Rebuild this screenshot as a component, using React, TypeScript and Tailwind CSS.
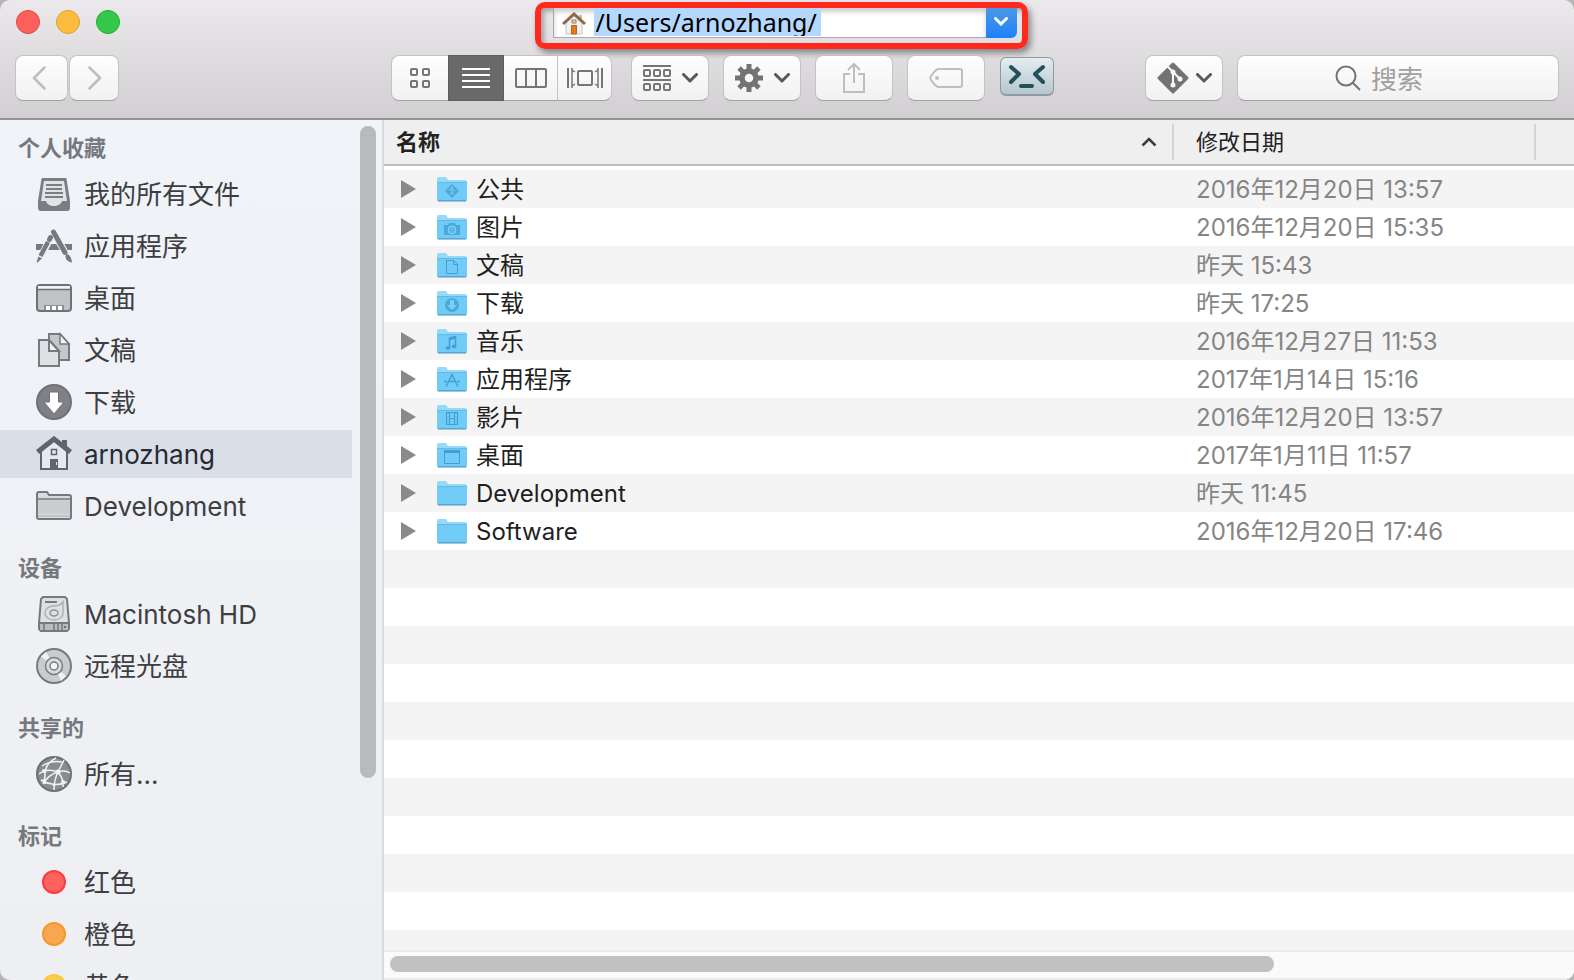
import React from "react";
import clsx from "clsx";

type SidebarItem = { label: string; icon: React.ReactNode; active?: boolean };

type SidebarSection = { title: string; items: SidebarItem[] };

type FileRow = { name: string; date: string; glyph?: React.ReactNode };

/* ---------- sidebar icons, 36x36 ---------- */

function Icon36({ children }: { children: React.ReactNode }) {
  return (
    <svg viewBox="0 0 36 36" className="size-9 shrink-0" fill="none" aria-hidden="true">
      {children}
    </svg>
  );
}

const AllFilesIcon = (
  <Icon36>
    <path d="M6.5 3h23L33 25v8.500H3V25z" fill="#7b7d82" />
    <path d="M8 5h20l3 20h-5c-1 3.500-4 5-8 5s-7-1.500-8-5H5z" fill="#e2e3e7" />
    <path d="M6.500 3h23L33 25v7a2 2 0 0 1-2 2H5a2 2 0 0 1-2-2v-7z" stroke="#7b7d82" strokeWidth="2" strokeLinejoin="round" />
    <path d="M10 9h16M10 13h16M9 17h18M9 21h18" stroke="#7b7d82" strokeWidth="2" />
  </Icon36>
);

const AppsIcon = (
  <Icon36>
    <path d="M0 16h36v6H0z" fill="#77797e" />
    <path d="M17.500 4 34 33" stroke="#f0f2f6" strokeWidth="7" />
    <path d="M15 9 2 34" stroke="#f0f2f6" strokeWidth="7" />
    <path d="M17.500 4 29 24.500" stroke="#77797e" strokeWidth="5" strokeLinecap="round" />
    <path d="M30 26.500c3-1 5 2 6 8-5-1-7.500-4-6-8z" fill="#77797e" />
    <path d="m14.500 9.500-1 2" stroke="#77797e" strokeWidth="5" strokeLinecap="round" />
    <path d="m12 14-7.500 14" stroke="#77797e" strokeWidth="4.500" />
    <path d="M2.500 28.500 6 30.500l-4.500 4-1-.5z" fill="#77797e" />
    <path d="M15.500 22h4l-3-5.500z" fill="#77797e" />
  </Icon36>
);

const DesktopIcon = (
  <Icon36>
    <rect x="1" y="5" width="34" height="26" rx="3" fill="#c0c2c6" stroke="#6f7175" strokeWidth="2" />
    <path d="M2 6h32v3H2z" fill="#f2f3f6" />
    <path d="M1 9.500h34" stroke="#6f7175" strokeWidth="1.500" />
    <path d="M8 25h20v5H8z" fill="#8e9094" />
    <path d="M10 26h4v4h-4zM16 26h4v4h-4zM22 26h4v4h-4z" fill="#fff" />
  </Icon36>
);

const DocumentsIcon = (
  <Icon36>
    <path d="M13 2h11l9 10v16H13z" fill="#c5c7cb" stroke="#77797e" strokeWidth="2" />
    <path d="M24 2v10h9z" fill="#f0f2f6" stroke="#77797e" strokeWidth="1.500" />
    <path d="M3 8h10l10 11v15H3z" fill="#dfe0e4" stroke="#77797e" strokeWidth="2" />
    <path d="M13 8v11h10z" fill="#f0f2f6" stroke="#77797e" strokeWidth="2" />
  </Icon36>
);

const DownloadsIcon = (
  <Icon36>
    <circle cx="18" cy="18" r="17" fill="#7f8186" stroke="#6f7175" strokeWidth="2" />
    <path d="M13.500 8h9v10H28L18 30 8 18h5.500z" fill="#fff" stroke="#6f7175" />
  </Icon36>
);

const HomeIcon = (
  <Icon36>
    <path d="M26 4h5v10h-5z" fill="#5f6470" />
    <path d="M5 15 18 4l13 11v18H5z" fill="#e6e9f0" stroke="#5f6470" strokeWidth="2" />
    <path d="M1.500 16 18 3l16.500 13" stroke="#5f6470" strokeWidth="5" />
    <path d="M15.500 13.500h5v5h-5z" fill="#e6e9f0" stroke="#5f6470" strokeWidth="1.500" />
    <path d="M14 23h8v10h-8z" fill="#5f6470" />
    <path d="M20 26h1v3h-1z" fill="#e6e9f0" />
  </Icon36>
);

const FolderIcon = (
  <Icon36>
    <path d="M1 6c0-2 1-2 2-2h8l2 3h20c1 0 2 .5 2 2v20c0 1-1 2-2 2H3c-1 0-2-1-2-2z" fill="#d9dbde" stroke="#77797e" strokeWidth="2" />
    <path d="M2 12h32v14H2z" fill="#cbcdd0" />
    <path d="M1 11h34" stroke="#77797e" strokeWidth="1.500" />
    <path d="M2 28h32" stroke="#a5a7aa" />
  </Icon36>
);

const HardDiskIcon = (
  <Icon36>
    <path d="M7 1h22l2 2 2 24v6l-2 2H5l-2-2v-6L5 3z" fill="#dfe0e4" stroke="#77797e" strokeWidth="2" strokeLinejoin="round" />
    <path d="M4 28h28v6H4z" fill="#b9bbbf" />
    <path d="M3 27h30" stroke="#77797e" strokeWidth="2" />
    <path d="M8 28v6M18 28v6M22 28v6M26 28v6" stroke="#85878b" strokeWidth="2" />
    <path d="M9 6h12" stroke="#77797e" strokeWidth="2" />
    <path d="M27 6v11c0 4-4 7-9 7s-9-3-9-7 4-7 8-7c5 0 8-1 10-4z" stroke="#aeb0b5" strokeWidth="1.500" />
    <ellipse cx="18" cy="17" rx="4" ry="3" stroke="#8e9095" strokeWidth="1.500" />
    <circle cx="29" cy="31" r="1" fill="#55575b" />
  </Icon36>
);

const DiscIcon = (
  <Icon36>
    <circle cx="18" cy="18" r="17" fill="#cacbcf" stroke="#77797e" strokeWidth="2" />
    <path d="M18 18 5 8.500 10 4zM18 18l12 10-5 5z" fill="#f0f1f3" />
    <circle cx="18" cy="18" r="8.500" fill="#d9dadd" stroke="#77797e" strokeWidth="1.500" />
    <circle cx="18" cy="18" r="4" fill="#f4f5f7" stroke="#77797e" strokeWidth="1.500" />
  </Icon36>
);

const NetworkIcon = (
  <Icon36>
    <circle cx="18" cy="18" r="17" fill="#898b8f" stroke="#6f7175" strokeWidth="2" />
    <path
      d="M20 2C10 7 8 14 9 28M6 10c6-4 14-5 20-4M22 16 28 4M22 16C14 13 8 14 3 18M22 16c6-2 9-1 12 1M22 16C14 18 10 23 7 28M22 16c4 5 6 9 5 15M22 16c-3 6-4 12-4 18M5 24c8 5 18 6 26 2"
      stroke="#f0f2f4"
      strokeWidth="1.500"
    />
    <circle cx="22" cy="16" r="2.500" fill="#f0f2f4" />
    <circle cx="8" cy="15" r="2" fill="#f0f2f4" />
    <circle cx="27" cy="26" r="2" fill="#f0f2f4" />
    <circle cx="8" cy="25" r="2" fill="#f0f2f4" />
    <circle cx="18" cy="29" r="1.500" fill="#f0f2f4" />
  </Icon36>
);

function TagDot({ className }: { className: string }) {
  return (
    <span className="flex w-9 shrink-0 justify-center">
      <span className={clsx("size-6 rounded-full border-2", className)} />
    </span>
  );
}

const sections: SidebarSection[] = [
  {
    title: "个人收藏",
    items: [
      { label: "我的所有文件", icon: AllFilesIcon },
      { label: "应用程序", icon: AppsIcon },
      { label: "桌面", icon: DesktopIcon },
      { label: "文稿", icon: DocumentsIcon },
      { label: "下载", icon: DownloadsIcon },
      { label: "arnozhang", icon: HomeIcon, active: true },
      { label: "Development", icon: FolderIcon },
    ],
  },
  {
    title: "设备",
    items: [
      { label: "Macintosh HD", icon: HardDiskIcon },
      { label: "远程光盘", icon: DiscIcon },
    ],
  },
  {
    title: "共享的",
    items: [{ label: "所有...", icon: NetworkIcon }],
  },
  {
    title: "标记",
    items: [
      { label: "红色", icon: <TagDot className="border-[#ff3b3b] bg-[#ff6361]" /> },
      { label: "橙色", icon: <TagDot className="border-[#fd9426] bg-[#f6a74f]" /> },
      { label: "黄色", icon: <TagDot className="border-[#fdc92e] bg-[#f5cf55]" /> },
    ],
  },
];

/* ---------- file list ---------- */

const files: FileRow[] = [
  {
    name: "公共",
    date: "2016年12月20日 13:57",
    glyph: (
      <>
        <path d="m15 7 7 7-7 7-7-7z" fill="#4aa8dc" />
        <circle cx="15" cy="10.500" r="1" fill="#7ccdf7" />
        <path d="m12 13 3-1 3 2M15 12v3l-2 3M15 15l2 3" stroke="#7ccdf7" fill="none" />
      </>
    ),
  },
  {
    name: "图片",
    date: "2016年12月20日 15:35",
    glyph: (
      <>
        <path d="M7 10h4l1-2h6l1 2h4v10H7z" fill="#4aa8dc" />
        <circle cx="15" cy="15" r="4" fill="#5bb8ea" stroke="#8ad4f8" />
      </>
    ),
  },
  {
    name: "文稿",
    date: "昨天 15:43",
    glyph: <path d="M9.500 7.500h7l4 4v9h-11zM16.500 7.500v4h4" fill="none" stroke="#3f9fd4" />,
  },
  {
    name: "下载",
    date: "昨天 17:25",
    glyph: (
      <>
        <circle cx="15" cy="14" r="7" fill="#4aa8dc" />
        <path d="M13 9h4v5h3l-5 5-5-5h3z" fill="#7ccdf7" />
      </>
    ),
  },
  {
    name: "音乐",
    date: "2016年12月27日 11:53",
    glyph: (
      <>
        <path d="M12.500 18.500V9l6-1.500v9.500M12.500 10.500l6-1.500" fill="none" stroke="#3f9fd4" strokeWidth="1.500" />
        <ellipse cx="11" cy="19" rx="2.500" ry="1.800" fill="#3f9fd4" />
        <ellipse cx="17" cy="17.500" rx="2.500" ry="1.800" fill="#3f9fd4" />
      </>
    ),
  },
  {
    name: "应用程序",
    date: "2017年1月14日 15:16",
    glyph: (
      <path d="M15.500 7 9 19.500M14.500 7 21 19.500M7 14.500h3M12.500 14.500h5M20 14.500h3" fill="none" stroke="#3f9fd4" strokeWidth="1.500" />
    ),
  },
  {
    name: "影片",
    date: "2016年12月20日 13:57",
    glyph: (
      <>
        <path d="M9.500 7.500h11v12h-11zM12.500 7.500v12M17.500 7.500v12M12.500 13.500h5" fill="none" stroke="#3f9fd4" />
        <path d="M11 8v12M19 8v12" fill="none" stroke="#3f9fd4" strokeDasharray="1 2" />
      </>
    ),
  },
  {
    name: "桌面",
    date: "2017年1月11日 11:57",
    glyph: (
      <>
        <path d="M7.500 7.500h15v13h-15z" fill="none" stroke="#3f9fd4" />
        <path d="M8 8h14v2H8z" fill="#3f9fd4" />
      </>
    ),
  },
  { name: "Development", date: "昨天 11:45" },
  { name: "Software", date: "2016年12月20日 17:46" },
];

// empty striped rows that fill the list below the files
const fillerRows = Array.from({ length: 30 }, (_, i) => i);

function BlueFolder({ glyph }: { glyph?: React.ReactNode }) {
  return (
    <svg viewBox="0 -1 30 26" className="h-[26px] w-[30px] shrink-0" aria-hidden="true">
      <path d="M1 24.500h28" stroke="#a9c6d6" />
      <path d="M0 2q0-2 2-2h7l2 3h17q2 0 2 2v18q0 1-1 1H1q-1 0-1-1z" fill="#93daf9" />
      <path d="M0 6h30v17q0 1-1 1H1q-1 0-1-1z" fill="#70cbf7" />
      <path d="M0 5.500h30" stroke="#62b9e6" />
      <path d="M1 23.500h28" stroke="#4fa9d8" />
      {glyph}
    </svg>
  );
}

/* ---------- toolbar ---------- */

const buttonBase =
  "flex h-[46px] items-center justify-center border border-[#c4c2c4] border-b-[#a3a1a3] bg-linear-to-b from-[#fefefe] to-[#f1f1f1]";

function ChevronDown() {
  return (
    <svg viewBox="0 0 16 10" className="h-2.5 w-4" fill="none" stroke="#58585a" strokeWidth="3" aria-hidden="true">
      <path d="m1.500 1.500 6.500 6.500 6.500-6.500" strokeLinecap="round" strokeLinejoin="round" />
    </svg>
  );
}

function Toolbar() {
  return (
    <div className="flex items-center px-[15px]">
      <div className="flex gap-px">
        <button aria-label="后退" className={clsx(buttonBase, "w-[53px] rounded-lg pr-1.5")}>
          <svg viewBox="0 0 14 24" className="h-6 w-3.5" fill="none" stroke="#bdbdbd" strokeWidth="2.500" strokeLinecap="round" strokeLinejoin="round">
            <path d="M12.500 1.500 2 12l10.500 10.500" />
          </svg>
        </button>
        <button aria-label="前进" className={clsx(buttonBase, "w-[50px] rounded-lg pl-0.5")}>
          <svg viewBox="0 0 14 24" className="h-6 w-3.5" fill="none" stroke="#bdbdbd" strokeWidth="2.500" strokeLinecap="round" strokeLinejoin="round">
            <path d="M1.500 1.500 12 12 1.500 22.500" />
          </svg>
        </button>
      </div>

      <div className="grow-3" />

      <div className="flex">
        <button aria-label="图标" className={clsx(buttonBase, "w-[57px] rounded-l-lg border-r-0")}>
          <svg viewBox="0 0 20 20" className="size-5" fill="none" stroke="#757575" strokeWidth="2">
            <rect x="1" y="1" width="6" height="6" rx="1" />
            <rect x="13" y="1" width="6" height="6" rx="1" />
            <rect x="1" y="13" width="6" height="6" rx="1" />
            <rect x="13" y="13" width="6" height="6" rx="1" />
          </svg>
        </button>
        <button aria-label="列表" aria-pressed="true" className="flex h-[46px] w-14 items-center justify-center border border-[#5f5f5f] bg-[#696969]">
          <svg viewBox="0 0 28 20" className="h-5 w-7" stroke="#fff" strokeWidth="2">
            <path d="M0 1h28M0 7h28M0 13h28M0 19h28" />
          </svg>
        </button>
        <button aria-label="分栏" className={clsx(buttonBase, "w-[53px] border-x-0")}>
          <svg viewBox="0 0 32 20" className="h-5 w-8" fill="none" stroke="#757575" strokeWidth="2">
            <rect x="1" y="1" width="30" height="18" rx="1" />
            <path d="M11 1v18M21 1v18" />
          </svg>
        </button>
        <button aria-label="封面流" className={clsx(buttonBase, "w-[55px] rounded-r-lg")}>
          <svg viewBox="0 0 36 20" className="h-5 w-9" fill="none" stroke="#757575" strokeWidth="2">
            <path d="M1 0v20M35 0v20" />
            <path d="M5 0v20M5 2l3 2M5 18l3-2M31 0v20M31 2l-3 2M31 18l-3-2" strokeWidth="1.500" />
            <rect x="11" y="3" width="14" height="14" rx="1" />
          </svg>
        </button>
      </div>

      <button aria-label="排列" className={clsx(buttonBase, "ml-[19px] w-[78px] gap-[11px] rounded-lg")}>
        <svg viewBox="0 0 28 26" className="h-[26px] w-7" fill="none" stroke="#757575" strokeWidth="2">
          <path d="M0 1h28M0 15h28" />
          <rect x="1" y="5" width="6" height="6" rx="1" />
          <rect x="11" y="5" width="6" height="6" rx="1" />
          <rect x="21" y="5" width="6" height="6" rx="1" />
          <rect x="1" y="19" width="6" height="6" rx="1" />
          <rect x="11" y="19" width="6" height="6" rx="1" />
          <rect x="21" y="19" width="6" height="6" rx="1" />
        </svg>
        <ChevronDown />
      </button>

      <button aria-label="操作" className={clsx(buttonBase, "ml-3.5 w-[78px] gap-[11px] rounded-lg")}>
        <svg viewBox="0 0 28 28" className="size-7" fill="none" stroke="#737373">
          <circle cx="14" cy="14" r="7" strokeWidth="5.500" />
          <path
            d="M14 0v6M14 22v6M0 14h6M22 14h6M4.100 4.100l4.300 4.300M19.600 19.600l4.300 4.300M4.100 23.900l4.300-4.300M19.600 8.400l4.300-4.300"
            strokeWidth="5"
          />
        </svg>
        <ChevronDown />
      </button>

      <button aria-label="共享" className={clsx(buttonBase, "ml-3.5 w-[78px] rounded-lg")}>
        <svg viewBox="0 0 22 30" className="h-[30px] w-[22px]" fill="none" stroke="#bebebe" strokeWidth="2">
          <path d="M7 11H1v18h20V11h-6M11 20V2M5 7l6-6 6 6" />
        </svg>
      </button>

      <button aria-label="标记" className={clsx(buttonBase, "ml-3.5 w-[78px] rounded-lg")}>
        <svg viewBox="0 0 34 20" className="h-5 w-[34px]" fill="none" stroke="#bebebe" strokeWidth="2">
          <path d="M10 1h21a2 2 0 0 1 2 2v14a2 2 0 0 1-2 2H10q-2 0-4-2l-4-5q-1-2 0-4l4-5q2-2 4-2z" />
          <circle cx="8" cy="10" r="2" fill="#bebebe" stroke="none" />
        </svg>
      </button>

      <button
        aria-label="终端"
        className="mt-0.5 ml-[15px] flex h-[39px] w-[54px] items-center justify-center self-start rounded-md border border-b-2 border-[#8d9aa1] bg-linear-to-b from-[#e4edf1] to-[#b5c6cf]"
      >
        <svg viewBox="0 0 38 24" className="h-6 w-[38px]" fill="none" stroke="#24505a" strokeWidth="4" strokeLinecap="round" strokeLinejoin="round">
          <path d="m3 3 8 7-8 8M35 3l-8 7 8 8" />
          <path d="M13 22h11" />
        </svg>
      </button>

      <div className="grow" />

      <button aria-label="Git" className={clsx(buttonBase, "w-[78px] gap-[7px] rounded-lg")}>
        <svg viewBox="0 0 32 32" className="size-8" fill="none">
          <path d="m16 2 14 14-14 14L2 16z" fill="#737373" stroke="#737373" strokeWidth="3" strokeLinejoin="round" />
          <path d="m10 4 6 6v13M16 10l7 7" stroke="#f8f8f8" strokeWidth="2" />
          <circle cx="16" cy="10" r="2.500" fill="#f8f8f8" />
          <circle cx="16" cy="23" r="2.500" fill="#f8f8f8" />
          <circle cx="23" cy="17" r="2.500" fill="#f8f8f8" />
        </svg>
        <ChevronDown />
      </button>

      <label className={clsx(buttonBase, "ml-3.5 w-[322px] gap-2.5 rounded-lg pr-[38px]")}>
        <svg viewBox="0 0 26 26" className="size-[26px]" fill="none" stroke="#737373" strokeWidth="2">
          <circle cx="11" cy="11" r="9.500" />
          <path d="m18 18 7 7" />
        </svg>
        <input
          type="search"
          aria-label="搜索"
          placeholder="搜索"
          className="field-sizing-content bg-transparent pb-0.5 text-[26px] leading-8 outline-none placeholder:text-[#a0a0a0]"
        />
      </label>
    </div>
  );
}

function AddressBar() {
  return (
    <div className="flex h-[47px] w-[493px] shrink-0 rounded-[10px] border-6 border-[#ff2a1c] pr-[5px] pl-3 shadow-[3px_4px_6px_rgba(0,0,0,0.4),inset_3px_3px_5px_rgba(0,0,0,0.3)]">
      <div className="flex h-[30px] grow border-b border-l border-[#aaa8aa] bg-white shadow-[inset_0_4px_5px_rgba(0,0,0,0.2)]">
        <svg viewBox="0 0 24 24" className="mt-1 ml-2 size-6 shrink-0" fill="none" aria-hidden="true">
          <path d="M17 3h3v6h-3z" fill="#c9b9a6" />
          <path d="M4 11 12 4l8 7v11H4z" fill="#f1f1f1" stroke="#c4c4c4" />
          <path d="M1 12 12 2l11 10" stroke="#8e6a45" strokeWidth="3" />
          <path d="M9.500 13.500h5v8.500h-5z" fill="#e27a1c" stroke="#b8651a" />
          <path d="M10 8h4v3h-4z" fill="#d9dde0" stroke="#9a7a58" />
        </svg>
        <input
          aria-label="路径"
          defaultValue="/Users/arnozhang/"
          className="ml-2 field-sizing-content h-7 bg-[#b4d8fd] pr-1 pl-0.5 font-['Noto_Sans'] text-[25px] leading-7 text-black outline-none"
        />
      </div>
      <button aria-label="显示路径" className="flex h-[30px] w-[31px] items-center justify-center rounded-br-md bg-linear-to-b from-[#4a96e6] to-[#1a82fb] pb-1">
        <svg viewBox="0 0 14 9" className="h-[9px] w-3.5" fill="none" stroke="#fff" strokeWidth="3" strokeLinecap="round">
          <path d="m1.500 1.500 5.500 5.500 5.500-5.500" />
        </svg>
      </button>
    </div>
  );
}

function Sidebar() {
  return (
    <aside className="flex w-96 shrink-0 justify-between overflow-hidden border-r-2 border-[#d9dbe0] bg-linear-to-b from-[#f0f3f8] to-[#eeeff3] pt-1.5 pr-1.5">
      <nav className="w-[352px]">
        {sections.map((section) => (
          <section key={section.title} className="mb-4">
            <h2 className="flex h-11 items-center pl-[18px] text-[22px] leading-8 font-bold text-[#75787c]">
              {section.title}
            </h2>
            <ul className="flex flex-col gap-1">
              {section.items.map((item) => (
                <li key={item.label}>
                  <a
                    href="#"
                    className={clsx(
                      "flex h-12 items-center gap-3 pl-9 text-[26px] leading-8",
                      item.active ? "bg-[#dadee7] text-[#262a33]" : "text-[#3d3e41]"
                    )}
                  >
                    {item.icon}
                    <span className="pt-0.5">{item.label}</span>
                  </a>
                </li>
              ))}
            </ul>
          </section>
        ))}
      </nav>
      <div className="h-[652px] w-4 rounded-full bg-[#b9babc]" />
    </aside>
  );
}

function FileList() {
  return (
    <main className="flex min-w-0 grow flex-col bg-white">
      <div className="min-h-0 grow overflow-hidden">
        <table className="w-full table-fixed border-collapse text-left">
          <colgroup>
            <col />
            <col className="w-[362px]" />
            <col className="w-[38px]" />
          </colgroup>
          <thead>
            <tr className="h-[45px] border-b-2 border-[#bdbdbd] bg-[#efefef] text-[22px] leading-8 text-[#222]">
              <th className="p-0 pl-3">
                <div className="flex h-9 items-center justify-between border-r-2 border-[#d4d4d4] pr-[15px] font-bold">
                  名称
                  <svg viewBox="0 0 16 10" className="h-2.5 w-4" fill="none" stroke="#3c3c3c" strokeWidth="2.500" aria-hidden="true">
                    <path d="m1.500 8.500 6.500-6.500 6.500 6.500" />
                  </svg>
                </div>
              </th>
              <th className="p-0">
                <div className="flex h-9 items-center border-r-2 border-[#d4d4d4] pl-[22px] font-normal">修改日期</div>
              </th>
              <th className="p-0" />
            </tr>
          </thead>
          <tbody>
            <tr className="h-[5px]" aria-hidden="true">
              <td colSpan={3} className="p-0" />
            </tr>
            {files.map((file) => (
              <tr key={file.name} className="h-[38px] text-2xl leading-8 even:bg-[#f4f4f4]">
                <td className="p-0">
                  <div className="flex items-center pl-[17px] text-[#1f1f1f]">
                    <button aria-label={`展开 ${file.name}`} className="mr-[21px]">
                      <svg viewBox="0 0 15 18" className="h-[18px] w-[15px]" fill="#8a8a8a">
                        <path d="M0 0v18l15-9z" />
                      </svg>
                    </button>
                    <BlueFolder glyph={file.glyph} />
                    <span className="ml-[9px] pt-0.5">{file.name}</span>
                  </div>
                </td>
                <td className="p-0 pt-0.5 pl-[22px] whitespace-nowrap text-[#858585]">{file.date}</td>
                <td className="p-0" />
              </tr>
            ))}
            {fillerRows.map((i) => (
              <tr key={i} className="h-[38px] even:bg-[#f4f4f4]" aria-hidden="true">
                <td colSpan={3} className="p-0" />
              </tr>
            ))}
          </tbody>
        </table>
      </div>
      <div className="h-[30px] shrink-0 border-y-2 border-[#ebebeb] bg-[#fafafa] px-1.5 py-1">
        <div className="h-4 w-3/4 rounded-full bg-[#c1c1c1]" />
      </div>
    </main>
  );
}

export default function App() {
  return (
    <div className="h-screen bg-[#b5b5b5] font-[Inter,'Noto_Sans_CJK_SC',sans-serif]">
      <div className="flex h-full flex-col overflow-hidden rounded-[10px]">
        <header className="h-[120px] shrink-0 border-b-2 border-[#959395] bg-linear-to-b from-[#ebe9ec] to-[#d1cfd1] pt-0.5">
          <div className="flex h-[53px] items-start">
            <div className="flex flex-1 gap-4 pt-2 pl-4">
              <button aria-label="关闭" className="size-6 rounded-full border border-[#e2463f] bg-[#fc605c]" />
              <button aria-label="最小化" className="size-6 rounded-full border border-[#dfa033] bg-[#fdbc40]" />
              <button aria-label="缩放" className="size-6 rounded-full border border-[#27a833] bg-[#34c84a]" />
            </div>
            <AddressBar />
            <div className="mr-7 flex-1" />
          </div>
          <Toolbar />
        </header>
        <div className="flex min-h-0 grow">
          <Sidebar />
          <FileList />
        </div>
      </div>
    </div>
  );
}
